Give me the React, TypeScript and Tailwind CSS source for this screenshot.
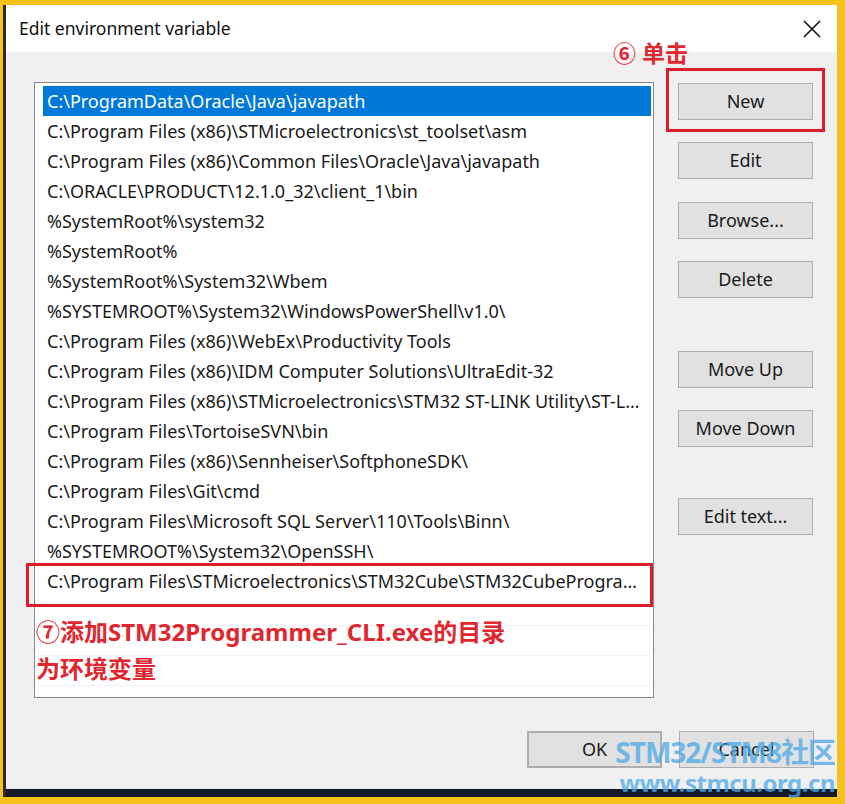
import React from "react";

const paths: string[] = [
  "C:\\ProgramData\\Oracle\\Java\\javapath",
  "C:\\Program Files (x86)\\STMicroelectronics\\st_toolset\\asm",
  "C:\\Program Files (x86)\\Common Files\\Oracle\\Java\\javapath",
  "C:\\ORACLE\\PRODUCT\\12.1.0_32\\client_1\\bin",
  "%SystemRoot%\\system32",
  "%SystemRoot%",
  "%SystemRoot%\\System32\\Wbem",
  "%SYSTEMROOT%\\System32\\WindowsPowerShell\\v1.0\\",
  "C:\\Program Files (x86)\\WebEx\\Productivity Tools",
  "C:\\Program Files (x86)\\IDM Computer Solutions\\UltraEdit-32",
  "C:\\Program Files (x86)\\STMicroelectronics\\STM32 ST-LINK Utility\\ST-LINK Utility",
  "C:\\Program Files\\TortoiseSVN\\bin",
  "C:\\Program Files (x86)\\Sennheiser\\SoftphoneSDK\\",
  "C:\\Program Files\\Git\\cmd",
  "C:\\Program Files\\Microsoft SQL Server\\110\\Tools\\Binn\\",
  "%SYSTEMROOT%\\System32\\OpenSSH\\",
  "C:\\Program Files\\STMicroelectronics\\STM32Cube\\STM32CubeProgrammer\\bin",
];

const font = { fontFamily: "'Noto Sans', 'Noto Sans CJK SC', sans-serif" };

function Button({ label, className = "" }: { label: string; className?: string }) {
  return (
    <div
      className={`flex h-[37px] w-[135px] items-center justify-center border border-[#adadad] bg-[#e1e1e1] text-[18px] text-[#1a1a1a] ${className}`}
    >
      {label}
    </div>
  );
}

export default function App() {
  return (
    <div
      className="flex h-[804px] w-[845px] flex-col bg-[#f4c21b] pl-[3px] pr-[8px] pt-[5px] pb-[7px] overflow-hidden"
      style={font}
    >
      <div className="flex flex-1 flex-col border-l-[3px] border-[#2a2a2a]">
        {/* title bar */}
        <div className="flex h-[47px] items-center justify-between bg-white pl-[13px] pr-[16px]">
          <span className="text-[17.5px] text-[#111]">Edit environment variable</span>
          <svg width="18" height="18" viewBox="0 0 18 18">
            <path d="M1 1 L17 17 M17 1 L1 17" stroke="#111" strokeWidth="1.6" />
          </svg>
        </div>

        {/* body */}
        <div className="relative flex flex-1 bg-[#f0f0f0] pl-[28px] pt-[30px]">
          <div className="h-[616px] w-[620px] border border-[#828790] bg-white px-[2px] pt-[3px]">
            {paths.map((p, i) => (
              <div
                key={i}
                className={`flex h-[30px] items-center overflow-hidden pr-[8px] ${
                  i === 0 ? "ml-[6px] pl-[4px] bg-[#0078d7] text-white" : "pl-[10px] text-[#1a1a1a]"
                }`}
              >
                <span className="block w-full truncate text-[18px]">{p}</span>
              </div>
            ))}
            {[0, 1, 2].map((i) => (
              <div key={`e${i}`} className="h-[30px] border-b border-[#f2f2f2]" />
            ))}
          </div>

          <div className="ml-[24px] flex flex-col">
            <Button label="New" className="mt-[1px]" />
            <Button label="Edit" className="mt-[22px]" />
            <Button label="Browse..." className="mt-[23px]" />
            <Button label="Delete" className="mt-[22px]" />
            <Button label="Move Up" className="mt-[53px]" />
            <Button label="Move Down" className="mt-[22px]" />
            <Button label="Edit text..." className="mt-[51px]" />
            <div className="mt-[196px] -ml-[151px] flex gap-[17px]">
              <Button label="OK" className="border-2 border-[#0078d7]" />
              <Button label="Cancel" />
            </div>
          </div>

          {/* annotations */}
          <div className="absolute left-[607px] top-[-16px] text-[23px] font-bold text-[#e0262e]">
            ⑥ 单击
          </div>
          <div className="absolute left-[660px] top-[16px] h-[64px] w-[159px] border-[3px] border-[#dc1f2a]" />
          <div className="absolute left-[20px] top-[511px] h-[44px] w-[627px] border-[3px] border-[#dc1f2a]" />
          <div className="absolute left-[30px] top-[565px] flex flex-col gap-[7px] text-[24px] font-bold leading-[30px] text-[#e0262e]">
            <span>⑦添加STM32Programmer_CLI.exe的目录</span>
            <span>为环境变量</span>
          </div>

          {/* watermark */}
          <div className="absolute right-[2px] top-[686px] flex flex-col items-end font-bold leading-none text-[#4aa8ea] opacity-75">
            <span className="text-[28px] tracking-[-1px]">STM32/STM8社区</span>
            <span className="mt-[5px] text-[24px] tracking-[-0.5px]">www.stmcu.org.cn</span>
          </div>
        </div>
        <div className="h-[8px] bg-[#141a26]" />
      </div>
    </div>
  );
}
